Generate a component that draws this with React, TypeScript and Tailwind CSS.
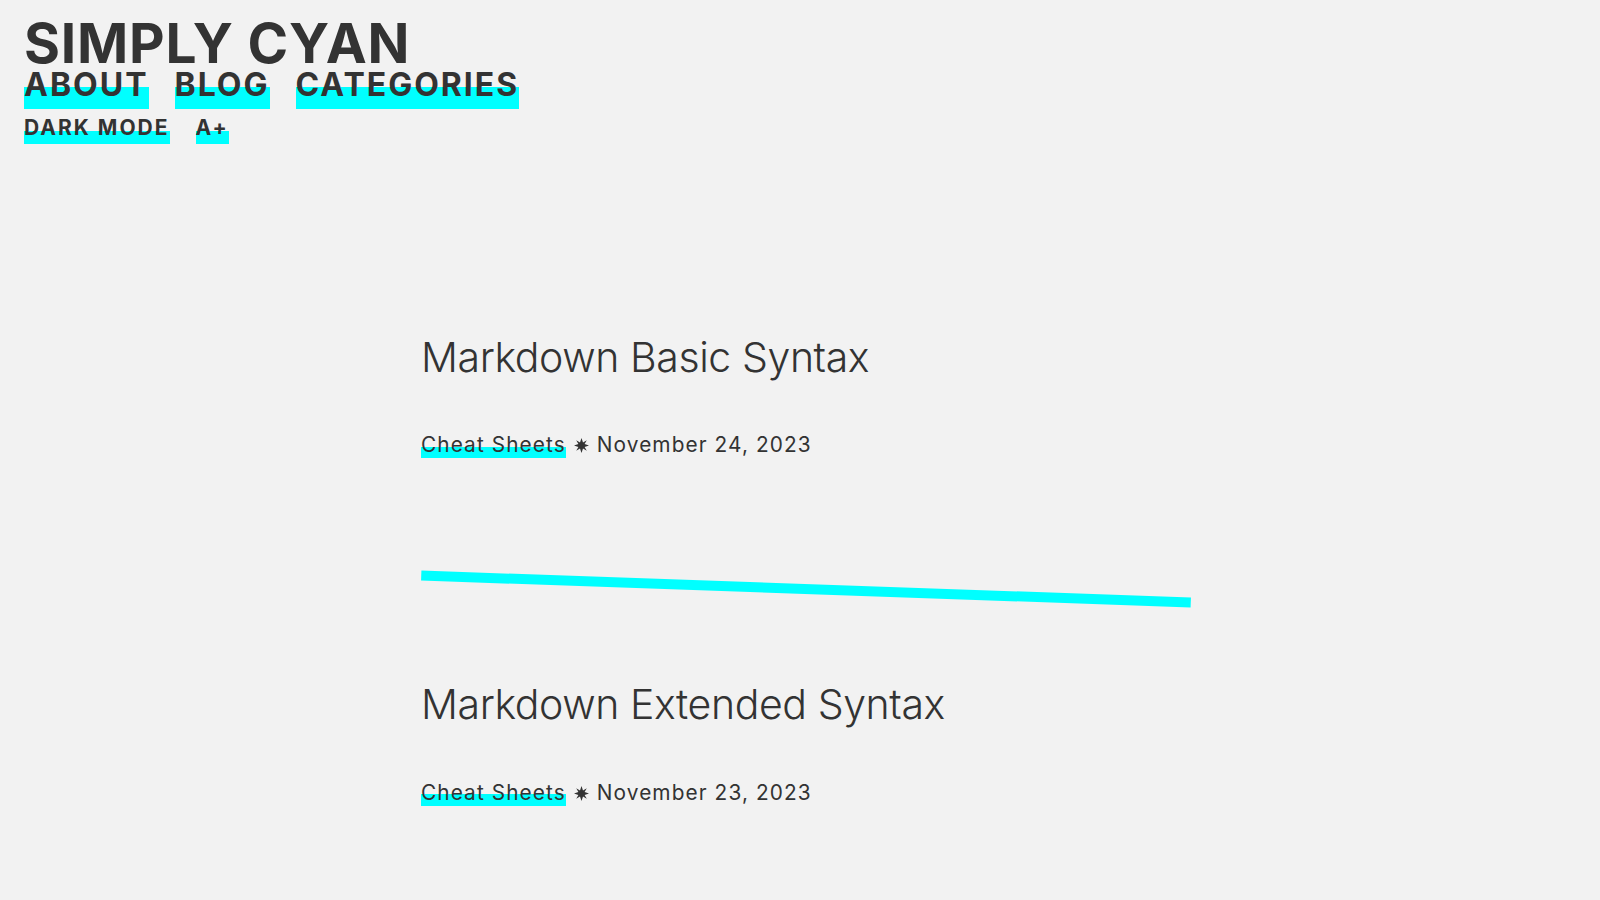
import React from 'react';

const hl = 'bg-[linear-gradient(transparent_50%,#00ffff_50%)]';

const Star = () => (
  <svg width="15" height="15" viewBox="-7.5 -7.5 15 15" className="inline-block align-[-1px]">
    <polygon
      fill="#333"
      points="0,-7.5 1.5,-3.1 5.3,-5.3 3.1,-1.5 7.5,0 3.1,1.5 5.3,5.3 1.5,3.1 0,7.5 -1.5,3.1 -5.3,5.3 -3.1,1.5 -7.5,0 -3.1,-1.5 -5.3,-5.3 -1.5,-3.1"
    />
  </svg>
);

const posts = [
  { title: 'Markdown Basic Syntax', category: 'Cheat Sheets', date: 'November 24, 2023' },
  { title: 'Markdown Extended Syntax', category: 'Cheat Sheets', date: 'November 23, 2023' },
];

const Post: React.FC<{ title: string; category: string; date: string; metaGap: string }> = ({
  title,
  category,
  date,
  metaGap,
}) => (
  <article>
    <h2 className="text-[41px] font-light leading-[48px] tracking-[-0.4px] whitespace-nowrap">{title}</h2>
    <div className={`${metaGap} text-[20.8px] leading-[20px] tracking-[1.1px] whitespace-nowrap`}>
      <a href="#" className={`inline-block pb-[3px] ${hl}`}>{category}</a>
      <span className="mx-[8px]"><Star /></span>
      <span>{date}</span>
    </div>
  </article>
);

export default function App() {
  return (
    <div className="min-h-screen bg-[#f2f2f2] text-[#333333] font-['Inter','Liberation_Sans',sans-serif]">
      <header className="px-[24px] pt-[16px]">
        <h1 className="text-[55px] font-bold leading-[55px] tracking-[0.8px] whitespace-nowrap">SIMPLY CYAN</h1>
        <nav className="-mt-[6px] flex gap-[26px] text-[32px] font-bold tracking-[2px]">
          {['ABOUT', 'BLOG', 'CATEGORIES'].map(item => (
            <a key={item} href="#" className={`inline-block leading-[40px] pb-[4px] ${hl}`}>
              {item}
            </a>
          ))}
        </nav>
        <div className="mt-[8px] flex gap-[26px] text-[21px] font-bold tracking-[2px]">
          <button className={`leading-[22px] pb-[5px] ${hl}`}>DARK MODE</button>
          <button className={`leading-[22px] pb-[5px] ${hl}`}>A+</button>
        </div>
      </header>

      <main className="pl-[421px] mt-[189px] pb-[80px]">
        <Post {...posts[0]} metaGap="mt-[54px]" />
        <hr className="mt-[126px] w-[770px] h-[10px] border-0 bg-[#00ffff] rotate-2" />
        <div className="mt-[86px]">
          <Post {...posts[1]} metaGap="mt-[55px]" />
        </div>
      </main>
    </div>
  );
}
